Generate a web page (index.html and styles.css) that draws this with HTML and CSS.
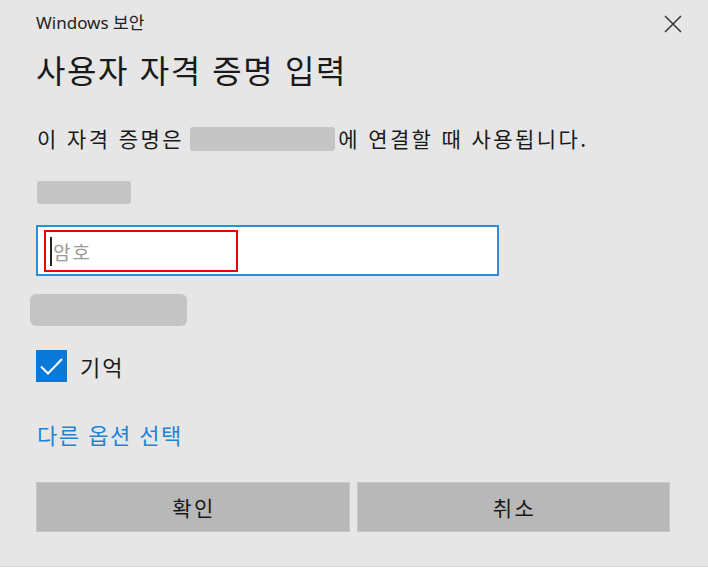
FILE: index.html
```html
<!DOCTYPE html>
<html lang="ko">
<head>
<meta charset="utf-8">
<title>Windows 보안</title>
<link rel="stylesheet" href="styles.css">
</head>
<body>
<div class="dialog">
  <div class="header">
    <div class="app-name">Windows 보안</div>
    <div class="close" aria-label="닫기">
      <svg width="18" height="18" viewBox="0 0 18 18"><path d="M1 1 L17 17 M17 1 L1 17" stroke="#333" stroke-width="1.5" fill="none"/></svg>
    </div>
  </div>
  <h1 class="title">사용자 자격 증명 입력</h1>
  <p class="desc">이 자격 증명은 <span class="redact redact-inline"></span>에 연결할 때 사용됩니다.</p>
  <div class="redact redact-user"></div>
  <div class="field">
    <div class="highlight">
      <span class="caret"></span><span class="placeholder">암호</span>
    </div>
  </div>
  <div class="redact redact-domain"></div>
  <label class="check-row">
    <span class="checkbox">
      <svg width="31" height="32" viewBox="0 0 31 32"><path d="M5 16.5 L12 23.5 L26 9" stroke="#fff" stroke-width="2" fill="none"/></svg>
    </span>
    <span class="check-label">기억</span>
  </label>
  <a class="link">다른 옵션 선택</a>
  <div class="buttons">
    <button class="btn">확인</button>
    <button class="btn">취소</button>
  </div>
</div>
<div class="footer-strip"></div>
</body>
</html>
```
FILE: styles.css
```css
html, body {
  margin: 0;
  padding: 0;
  background: #ffffff;
}
body {
  width: 708px;
  height: 573px;
  overflow: hidden;
  font-family: "Noto Sans CJK KR", "Noto Sans", sans-serif;
  color: #1f1f1f;
}
.dialog {
  box-sizing: border-box;
  height: 567px;
  background: #e6e6e6;
  border-bottom: 1px solid #d9d9d9;
  padding: 0 26px 0 36px;
  display: flex;
  flex-direction: column;
}
.header {
  display: flex;
  justify-content: space-between;
  align-items: center;
  height: 44px;
}
.app-name {
  font-family: "Noto Sans", "Noto Sans CJK KR", sans-serif;
  font-size: 17px;
  color: #222;
  margin-top: -2px;
}
.close {
  width: 18px;
  height: 18px;
  margin-top: 3px;
}
.close svg { display: block; }
.title {
  font-weight: normal;
  font-size: 32px;
  letter-spacing: 1.6px;
  line-height: 40px;
  margin: 5px 0 0 0;
  color: #1a1a1a;
}
.desc {
  font-size: 21px;
  letter-spacing: 2.4px;
  line-height: 28px;
  margin: 35px 0 0 1px;
  color: #1a1a1a;
}
.redact {
  background: #c4c4c4;
  border-radius: 3px;
}
.redact-inline {
  display: inline-block;
  width: 145px;
  height: 24px;
  vertical-align: -4px;
  margin-left: -2px;
  margin-right: 3px;
}
.redact-user {
  width: 94px;
  height: 23px;
  margin: 29px 0 0 1px;
}
.field {
  box-sizing: border-box;
  width: 463px;
  height: 51px;
  margin-top: 21px;
  background: #fff;
  border: 2px solid #2b8de0;
  padding: 3px 0 0 6px;
}
.highlight {
  box-sizing: border-box;
  width: 194px;
  height: 42px;
  border: 2px solid #f00000;
  display: flex;
  align-items: center;
  padding-left: 4px;
}
.caret {
  width: 2px;
  height: 29px;
  background: #222;
  margin-right: 1px;
}
.placeholder {
  font-size: 19px;
  color: #9a9a9a;
  letter-spacing: 2px;
}
.redact-domain {
  width: 157px;
  height: 32px;
  margin: 18px 0 0 -6px;
  border-radius: 6px;
}
.check-row {
  display: flex;
  align-items: center;
  margin-top: 24px;
  height: 32px;
}
.checkbox {
  width: 31px;
  height: 32px;
  background: #0a78d7;
  display: block;
}
.checkbox svg { display: block; }
.check-label {
  font-size: 22px;
  letter-spacing: 2px;
  margin-left: 13px;
  color: #1a1a1a;
}
.link {
  font-size: 22px;
  letter-spacing: 1.5px;
  line-height: 30px;
  color: #1d84d6;
  margin-top: 37px;
  margin-left: 1px;
}
.buttons {
  display: flex;
  gap: 7px;
  margin-top: 33px;
  margin-right: 12px;
}
.btn {
  flex: 1;
  height: 50px;
  background: #b8b8b8;
  border: 1px solid #c6c6c6;
  font-family: "Noto Sans CJK KR", sans-serif;
  font-size: 21px;
  letter-spacing: 2.5px;
  text-indent: 2.5px;
  color: #1a1a1a;
  padding: 0;
}
.footer-strip {
  height: 6px;
  background: #fff;
}
```
